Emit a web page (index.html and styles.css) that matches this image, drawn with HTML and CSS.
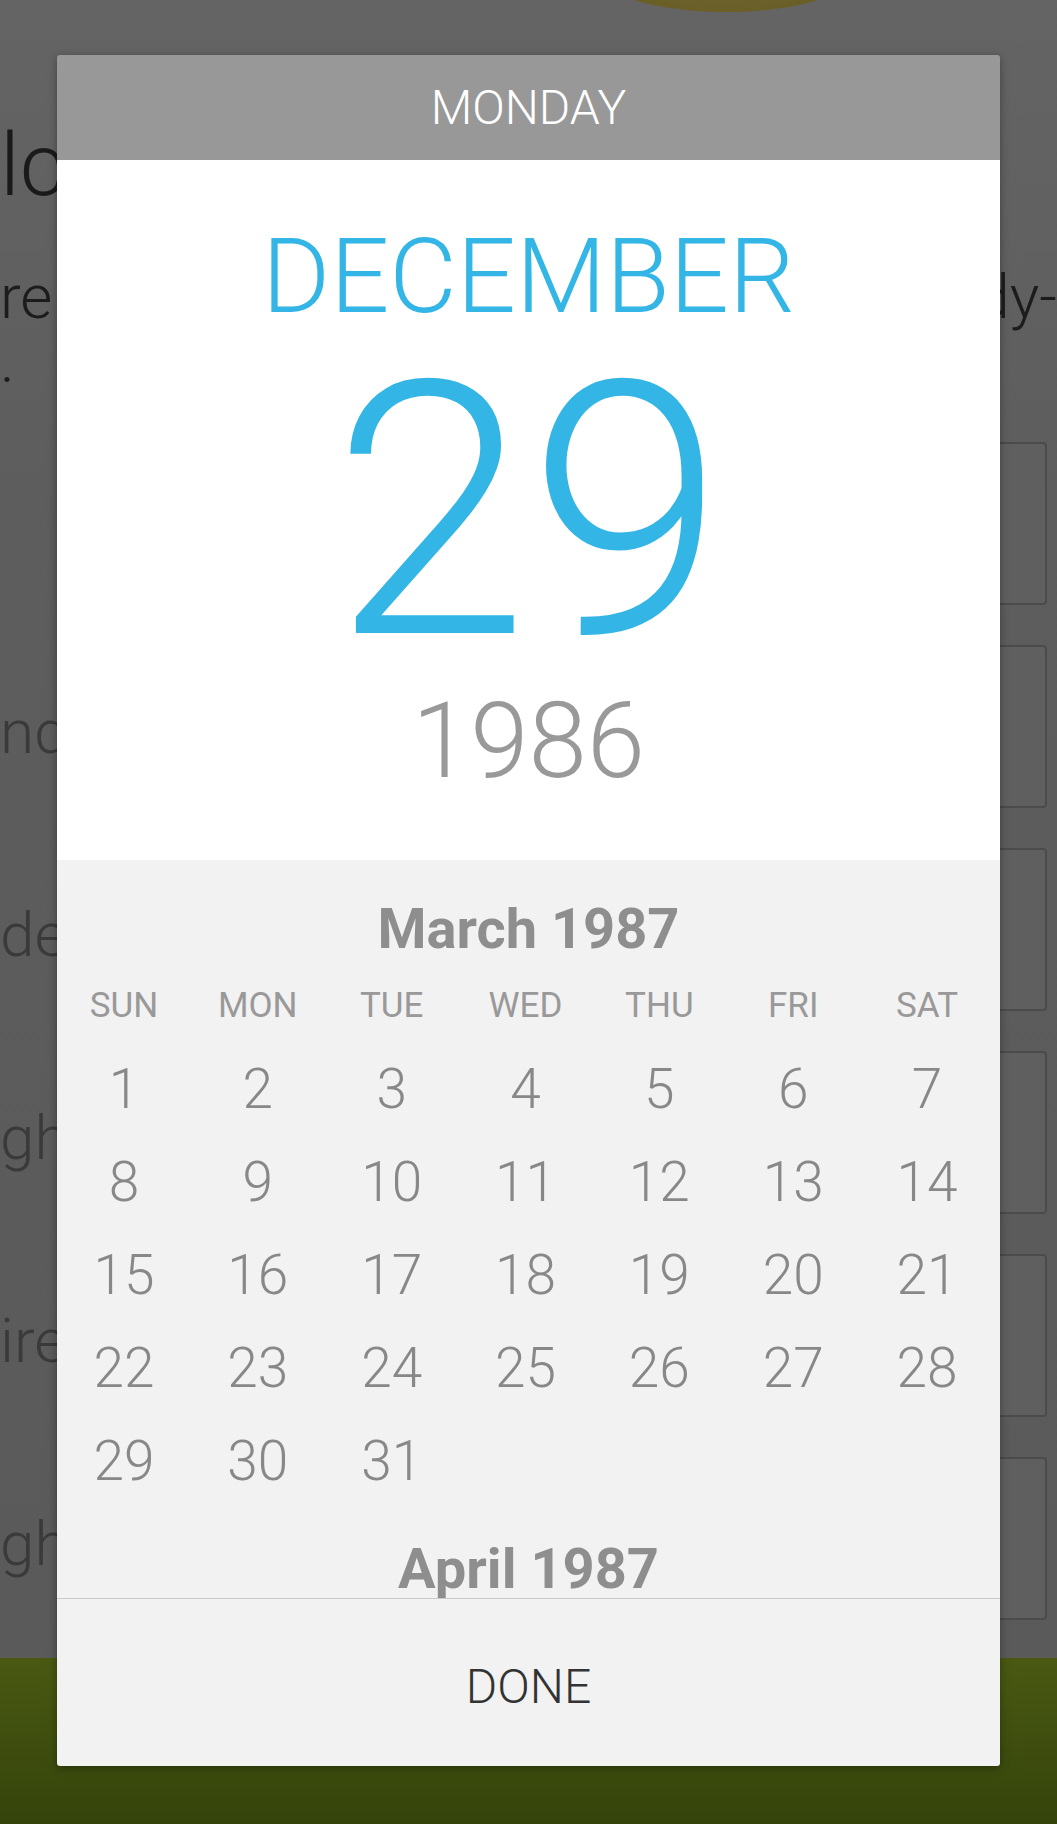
FILE: index.html
```html
<!DOCTYPE html>
<html lang="en">
<head>
<meta charset="utf-8">
<title>Date picker</title>
<link rel="stylesheet" href="styles.css">
</head>
<body>
<div class="page">
  <div class="logo"></div>
  <h1 class="title">lc</h1>
  <div class="intro">
    <div class="intro-line"><span>re</span><span>dy-</span></div>
    <div class="intro-line"><span>.</span></div>
  </div>
  <div class="form">
    <div class="row"><span class="label"></span><span class="field"></span></div>
    <div class="row"><span class="label">nd</span><span class="field"></span></div>
    <div class="row"><span class="label">de</span><span class="field"></span></div>
    <div class="row"><span class="label">gh</span><span class="field"></span></div>
    <div class="row"><span class="label">ire</span><span class="field"></span></div>
    <div class="row"><span class="label">gh</span><span class="field"></span></div>
  </div>
  <div class="footer"></div>

  <div class="dialog">
    <div class="dlg-head">MONDAY</div>
    <div class="dlg-date">
      <div class="d-month">DECEMBER</div>
      <div class="d-day">29</div>
      <div class="d-year">1986</div>
    </div>
    <div class="dlg-cal">
      <div class="cal-title">March 1987</div>
      <div class="weekdays">
        <span>SUN</span><span>MON</span><span>TUE</span><span>WED</span><span>THU</span><span>FRI</span><span>SAT</span>
      </div>
      <div class="days">
        <span>1</span><span>2</span><span>3</span><span>4</span><span>5</span><span>6</span><span>7</span>
        <span>8</span><span>9</span><span>10</span><span>11</span><span>12</span><span>13</span><span>14</span>
        <span>15</span><span>16</span><span>17</span><span>18</span><span>19</span><span>20</span><span>21</span>
        <span>22</span><span>23</span><span>24</span><span>25</span><span>26</span><span>27</span><span>28</span>
        <span>29</span><span>30</span><span>31</span>
      </div>
      <div class="cal-title next">April 1987</div>
    </div>
    <div class="dlg-foot">DONE</div>
  </div>
</div>
</body>
</html>
```

FILE: styles.css
```css
html, body {
  margin: 0;
  padding: 0;
}

body {
  width: 1057px;
  height: 1824px;
  overflow: hidden;
  font-family: Roboto, "Liberation Sans", sans-serif;
  background: #5c5c5c;
}

.page {
  position: relative;
  height: 1824px;
  overflow: hidden;
  display: flex;
  flex-direction: column;
  background: linear-gradient(#646464 0, #5d5d5d 500px, #5a5a5a 1650px);
}

.logo {
  flex: none;
  width: 272px;
  height: 90px;
  border-radius: 50%;
  margin: -78px 0 0 590px;
  background: radial-gradient(ellipse at 50% 30%, #6e6a3c 0, #6b5f28 70%, #5f5424 100%);
}

.title {
  margin: 103px 0 0 0;
  padding: 0;
  font-size: 88px;
  line-height: 100px;
  font-weight: 300;
  color: #1a1a1a;
}

.intro {
  margin-top: 50px;
  font-size: 62px;
  line-height: 64px;
  font-weight: 300;
  color: #1c1c1c;
}

.intro-line {
  display: flex;
  justify-content: space-between;
  height: 64px;
}

.form {
  margin-top: 49px;
  display: flex;
  flex-direction: column;
  gap: 40px;
}

.row {
  height: 163px;
  display: flex;
  align-items: center;
  justify-content: space-between;
}

.label {
  font-size: 62px;
  font-weight: 300;
  color: #3a3a3a;
  padding-top: 10px;
}

.field {
  width: 300px;
  height: 159px;
  margin-right: 10px;
  border: 2px solid #4b4b4b;
  border-radius: 4px;
  background: #5f5f5f;
}

.footer {
  flex: 1;
  margin-top: 38px;
  background: linear-gradient(#4a5912, #34440b);
}

/* ---------- dialog ---------- */

.dialog {
  position: absolute;
  left: 57px;
  top: 55px;
  width: 943px;
  border-radius: 3px;
  overflow: hidden;
  box-shadow: 0 2px 8px rgba(0, 0, 0, 0.35);
  text-align: center;
}

.dlg-head {
  height: 105px;
  display: flex;
  align-items: center;
  justify-content: center;
  background: #989898;
  color: #ffffff;
  font-size: 48px;
  font-weight: 300;
}

.dlg-date {
  background: #ffffff;
  padding: 62px 0 68px;
  font-weight: 300;
}

.d-month {
  font-size: 104px;
  line-height: 110px;
  color: #33b5e5;
}

.d-day {
  font-size: 354px;
  line-height: 360px;
  color: #33b5e5;
}

.d-year {
  font-size: 105px;
  line-height: 100px;
  color: #999999;
}

.dlg-cal {
  height: 738px;
  overflow: hidden;
  background: #f2f2f2;
  border-bottom: 1px solid #c9c9c9;
}

.cal-title {
  padding-top: 39px;
  font-size: 56px;
  line-height: 60px;
  font-weight: 700;
  color: #8e8e8e;
}

.cal-title.next {
  padding-top: 31px;
}

.weekdays,
.days {
  display: grid;
  grid-template-columns: repeat(7, 1fr);
  padding-right: 6px;
}

.weekdays {
  margin-top: 24px;
  font-size: 35px;
  line-height: 46px;
  color: #999999;
}

.days {
  margin-top: 14px;
  grid-auto-rows: 93px;
  font-size: 55px;
  line-height: 93px;
  font-weight: 300;
  color: #888888;
}

.dlg-foot {
  height: 160px;
  padding-top: 7px;
  display: flex;
  align-items: center;
  justify-content: center;
  background: #f2f2f2;
  color: #333333;
  font-size: 48px;
  font-weight: 300;
}
```
